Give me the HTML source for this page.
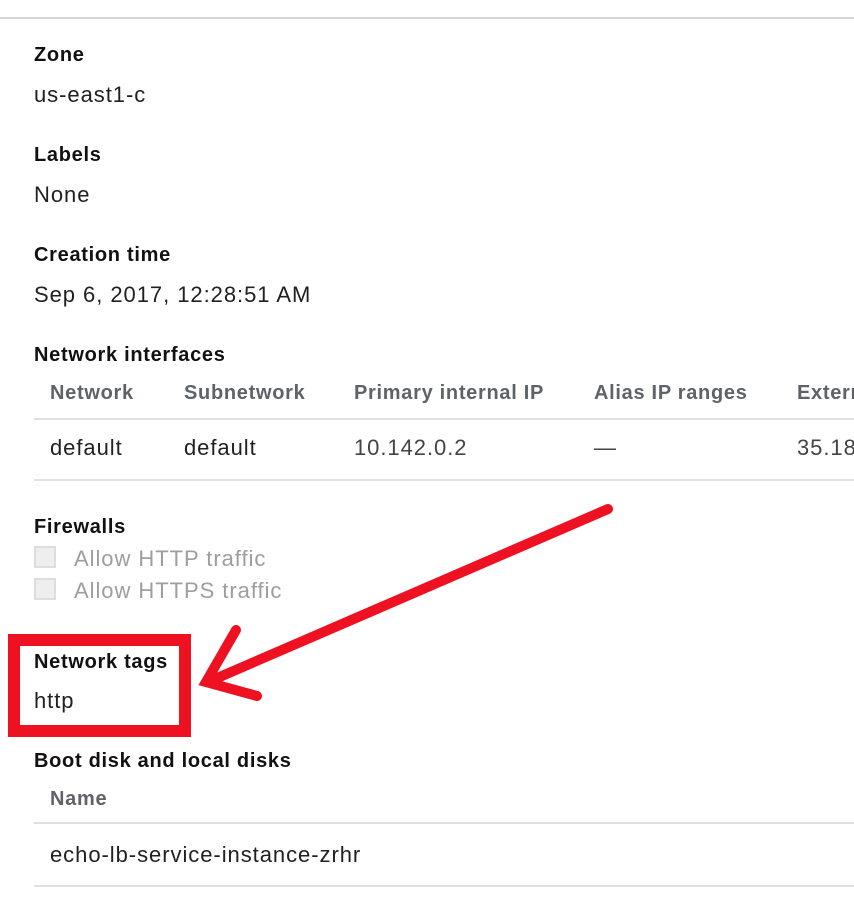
<html><head><style>
body{margin:0;width:854px;height:906px;background:#fff;font-family:"Liberation Sans",sans-serif;position:relative;overflow:hidden;color:#212121}
.a{position:absolute;white-space:nowrap;font-size:22px;line-height:24px;letter-spacing:0.95px}
.l{font-weight:bold;font-size:20px;color:#111;letter-spacing:0.7px}
.h{color:#5f6368;font-size:20px;font-weight:bold;letter-spacing:0.7px}
.g{color:#9e9e9e}
.hr{position:absolute;height:2px;background:#e0e0e0}
.cb{position:absolute;left:34px;width:22px;height:22px;background:#eee;border:2px solid #ddd;box-sizing:border-box}
</style></head><body>
<div class="hr" style="left:0;top:17px;width:854px;background:#d6d6d6"></div>
<div class="a l" style="left:34px;top:43px">Zone</div>
<div class="a" style="left:34px;top:83px">us-east1-c</div>
<div class="a l" style="left:34px;top:143px">Labels</div>
<div class="a" style="left:34px;top:183px">None</div>
<div class="a l" style="left:34px;top:243px">Creation time</div>
<div class="a" style="left:34px;top:283px">Sep 6, 2017, 12:28:51 AM</div>
<div class="a l" style="left:34px;top:343px">Network interfaces</div>
<div class="a h" style="left:50px;top:381px">Network</div>
<div class="a h" style="left:184px;top:381px">Subnetwork</div>
<div class="a h" style="left:354px;top:381px">Primary internal IP</div>
<div class="a h" style="left:594px;top:381px">Alias IP ranges</div>
<div class="a h" style="left:797px;top:381px">External</div>
<div class="hr" style="left:34px;top:418px;width:820px"></div>
<div class="a" style="left:50px;top:436px">default</div>
<div class="a" style="left:184px;top:436px">default</div>
<div class="a" style="left:354px;top:436px;color:#444">10.142.0.2</div>
<div class="a" style="left:594px;top:436px;color:#444">—</div>
<div class="a" style="left:797px;top:436px;color:#444">35.18</div>
<div class="hr" style="left:34px;top:479px;width:820px"></div>
<div class="a l" style="left:34px;top:515px">Firewalls</div>
<div class="cb" style="top:546px"></div>
<div class="a g" style="left:74px;top:547px">Allow HTTP traffic</div>
<div class="cb" style="top:578px"></div>
<div class="a g" style="left:74px;top:579px">Allow HTTPS traffic</div>
<div style="position:absolute;left:8px;top:634px;width:159px;height:79px;border:12px solid #ee1122"></div>
<div class="a l" style="left:34px;top:650px">Network tags</div>
<div class="a" style="left:34px;top:689px">http</div>
<div class="a l" style="left:34px;top:749px">Boot disk and local disks</div>
<div class="a h" style="left:50px;top:787px">Name</div>
<div class="hr" style="left:34px;top:822px;width:820px"></div>
<div class="a" style="left:50px;top:843px">echo-lb-service-instance-zrhr</div>
<div class="hr" style="left:34px;top:885px;width:820px"></div>
<svg style="position:absolute;left:0;top:0" width="854" height="906"><g stroke="#ee1122" stroke-width="10" stroke-linecap="round" fill="none"><path d="M608 509 L208 682"/><path d="M236 630 L206 682 L257 696"/></g></svg>
</body></html>
